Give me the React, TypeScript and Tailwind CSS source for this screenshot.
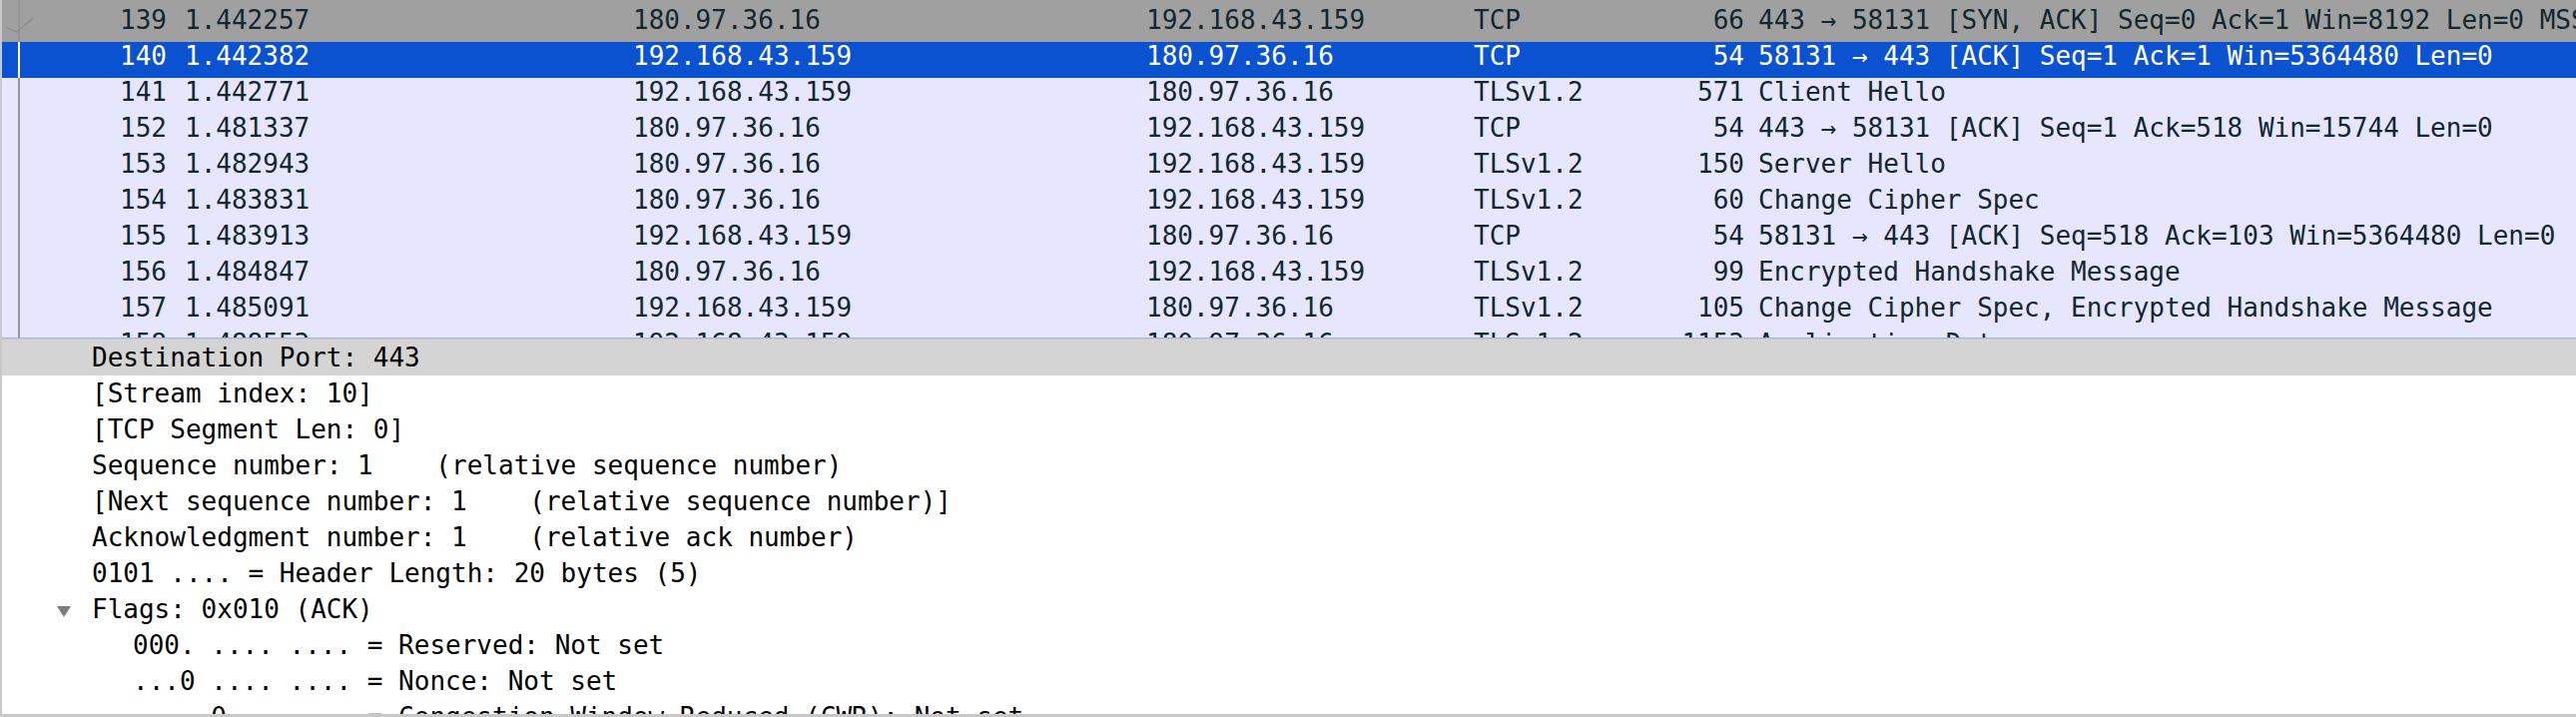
type Packet = {
  no: string;
  time: string;
  src: string;
  dst: string;
  proto: string;
  len: string;
  info: string;
  kind: "syn" | "sel" | "tcp";
  mark?: boolean;
};

const packets: Packet[] = [
  { no: "139", time: "1.442257", src: "180.97.36.16", dst: "192.168.43.159", proto: "TCP", len: "66", info: "443 → 58131 [SYN, ACK] Seq=0 Ack=1 Win=8192 Len=0 MSS=1440 WS=256 SACK_PERM=1", kind: "syn", mark: true },
  { no: "140", time: "1.442382", src: "192.168.43.159", dst: "180.97.36.16", proto: "TCP", len: "54", info: "58131 → 443 [ACK] Seq=1 Ack=1 Win=5364480 Len=0", kind: "sel" },
  { no: "141", time: "1.442771", src: "192.168.43.159", dst: "180.97.36.16", proto: "TLSv1.2", len: "571", info: "Client Hello", kind: "tcp" },
  { no: "152", time: "1.481337", src: "180.97.36.16", dst: "192.168.43.159", proto: "TCP", len: "54", info: "443 → 58131 [ACK] Seq=1 Ack=518 Win=15744 Len=0", kind: "tcp" },
  { no: "153", time: "1.482943", src: "180.97.36.16", dst: "192.168.43.159", proto: "TLSv1.2", len: "150", info: "Server Hello", kind: "tcp" },
  { no: "154", time: "1.483831", src: "180.97.36.16", dst: "192.168.43.159", proto: "TLSv1.2", len: "60", info: "Change Cipher Spec", kind: "tcp" },
  { no: "155", time: "1.483913", src: "192.168.43.159", dst: "180.97.36.16", proto: "TCP", len: "54", info: "58131 → 443 [ACK] Seq=518 Ack=103 Win=5364480 Len=0", kind: "tcp" },
  { no: "156", time: "1.484847", src: "180.97.36.16", dst: "192.168.43.159", proto: "TLSv1.2", len: "99", info: "Encrypted Handshake Message", kind: "tcp" },
  { no: "157", time: "1.485091", src: "192.168.43.159", dst: "180.97.36.16", proto: "TLSv1.2", len: "105", info: "Change Cipher Spec, Encrypted Handshake Message", kind: "tcp" },
  { no: "158", time: "1.488553", src: "192.168.43.159", dst: "180.97.36.16", proto: "TLSv1.2", len: "1153", info: "Application Data", kind: "tcp" },
];

type Field = { text: string; level: number; open?: boolean; selected?: boolean };

const fields: Field[] = [
  { text: "Destination Port: 443", level: 0, selected: true },
  { text: "[Stream index: 10]", level: 0 },
  { text: "[TCP Segment Len: 0]", level: 0 },
  { text: "Sequence number: 1    (relative sequence number)", level: 0 },
  { text: "[Next sequence number: 1    (relative sequence number)]", level: 0 },
  { text: "Acknowledgment number: 1    (relative ack number)", level: 0 },
  { text: "0101 .... = Header Length: 20 bytes (5)", level: 0 },
  { text: "Flags: 0x010 (ACK)", level: 0, open: true },
  { text: "000. .... .... = Reserved: Not set", level: 1 },
  { text: "...0 .... .... = Nonce: Not set", level: 1 },
  { text: ".... 0... .... = Congestion Window Reduced (CWR): Not set", level: 1 },
];

const PacketRow = ({ p, first }: { p: Packet; first?: boolean }) => {
  const bg =
    p.kind === "sel"
      ? "bg-[#0b52d0] text-white"
      : p.kind === "syn"
        ? "bg-[#a0a0a0] text-[#12272e]"
        : "bg-[#e7e6ff] text-[#12272e]";
  const line = p.kind === "sel" ? "bg-white" : "bg-[#959595]";

  return (
    <div
      className={`relative flex shrink-0 items-start whitespace-pre leading-[29px] overflow-hidden ${bg} ${
        first ? "h-[42px] pt-[6px]" : "h-[36px]"
      }`}
    >
      {/* related packet line */}
      <span className={`absolute left-[16px] top-0 h-full w-[2px] ${line}`} />
      {p.mark && (
        <svg className="absolute left-0 top-0" width="40" height="42" viewBox="0 0 40 42">
          <polyline points="3,27 15,32 31,18" fill="none" stroke="#8a8a8a" strokeWidth="1.2" />
        </svg>
      )}
      <span className="w-[165px] shrink-0 text-right">{p.no}</span>
      <span className="w-[18px] shrink-0" />
      <span className="w-[449px] shrink-0">{p.time}</span>
      <span className="w-[514px] shrink-0">{p.src}</span>
      <span className="w-[328px] shrink-0">{p.dst}</span>
      <span className="w-[200px] shrink-0">{p.proto}</span>
      <span className="w-[71px] shrink-0 text-right">{p.len}</span>
      <span className="pl-[14px] shrink-0">{p.info}</span>
    </div>
  );
};

const FieldRow = ({ f }: { f: Field }) => (
  <div
    className={`flex h-[36px] shrink-0 items-start whitespace-pre leading-[36px] text-black ${
      f.selected ? "bg-[#d4d4d4]" : ""
    } ${f.level === 1 ? "pl-[96px]" : "pl-[55px]"}`}
  >
    <span className="flex w-[35px] h-[36px] shrink-0 items-center">
      {f.open && (
        <svg width="14" height="11" viewBox="0 0 14 11" className="mt-[5px]">
          <polygon points="0,0 14,0 7,11" fill="#7d7d7d" />
        </svg>
      )}
    </span>
    <span>{f.text}</span>
  </div>
);

export default function App() {
  return (
    <div className="w-[2580px] h-[718px] overflow-hidden flex flex-col bg-white border-l-2 border-[#c9c9c9] font-['DejaVu_Sans_Mono',monospace] text-[26px]">
      <div className="h-[338px] shrink-0 flex flex-col overflow-hidden bg-[#e7e6ff]">
        {packets.map((p, i) => (
          <PacketRow key={p.no} p={p} first={i === 0} />
        ))}
      </div>
      <div className="h-[1px] shrink-0 bg-[#a3b4d6]" />
      <div className="h-[1px] shrink-0 bg-[#c6cddc]" />
      <div className="h-[375px] shrink-0 flex flex-col overflow-hidden bg-white">
        {fields.map((f) => (
          <FieldRow key={f.text} f={f} />
        ))}
      </div>
      <div className="h-[3px] shrink-0 bg-[#c8c8c8]" />
    </div>
  );
}
